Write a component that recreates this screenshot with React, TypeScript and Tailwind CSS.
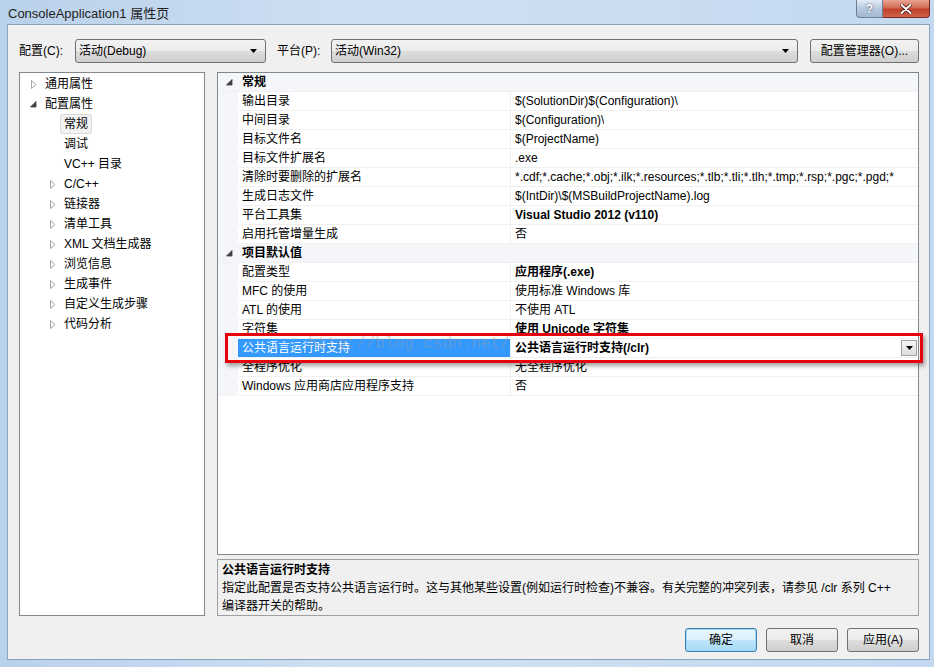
import React from 'react';

const FONT = { fontFamily: '"Liberation Sans", "Noto Sans CJK SC", sans-serif' };

type Prop = { name: string; value: string; bold?: boolean; selected?: boolean };
type Cat = { title: string; rows: Prop[] };

const cats: Cat[] = [
  {
    title: '常规',
    rows: [
      { name: '输出目录', value: '$(SolutionDir)$(Configuration)\\' },
      { name: '中间目录', value: '$(Configuration)\\' },
      { name: '目标文件名', value: '$(ProjectName)' },
      { name: '目标文件扩展名', value: '.exe' },
      {
        name: '清除时要删除的扩展名',
        value: '*.cdf;*.cache;*.obj;*.ilk;*.resources;*.tlb;*.tli;*.tlh;*.tmp;*.rsp;*.pgc;*.pgd;*',
      },
      { name: '生成日志文件', value: '$(IntDir)\\$(MSBuildProjectName).log' },
      { name: '平台工具集', value: 'Visual Studio 2012 (v110)', bold: true },
      { name: '启用托管增量生成', value: '否' },
    ],
  },
  {
    title: '项目默认值',
    rows: [
      { name: '配置类型', value: '应用程序(.exe)', bold: true },
      { name: 'MFC 的使用', value: '使用标准 Windows 库' },
      { name: 'ATL 的使用', value: '不使用 ATL' },
      { name: '字符集', value: '使用 Unicode 字符集', bold: true },
      { name: '公共语言运行时支持', value: '公共语言运行时支持(/clr)', bold: true, selected: true },
      { name: '全程序优化', value: '无全程序优化' },
      { name: 'Windows 应用商店应用程序支持', value: '否' },
    ],
  },
];

const tree: { label: string; level: number; arrow?: 'closed' | 'open'; selected?: boolean }[] = [
  { label: '通用属性', level: 0, arrow: 'closed' },
  { label: '配置属性', level: 0, arrow: 'open' },
  { label: '常规', level: 1, selected: true },
  { label: '调试', level: 1 },
  { label: 'VC++ 目录', level: 1 },
  { label: 'C/C++', level: 1, arrow: 'closed' },
  { label: '链接器', level: 1, arrow: 'closed' },
  { label: '清单工具', level: 1, arrow: 'closed' },
  { label: 'XML 文档生成器', level: 1, arrow: 'closed' },
  { label: '浏览信息', level: 1, arrow: 'closed' },
  { label: '生成事件', level: 1, arrow: 'closed' },
  { label: '自定义生成步骤', level: 1, arrow: 'closed' },
  { label: '代码分析', level: 1, arrow: 'closed' },
];

function Arrow({ kind }: { kind: 'closed' | 'open' }) {
  if (kind === 'closed')
    return (
      <svg width="6" height="9" viewBox="0 0 6 9">
        <path d="M0.5 0.5 L5 4.5 L0.5 8.5 Z" fill="white" stroke="#a6a6a6" />
      </svg>
    );
  return (
    <svg width="7" height="7" viewBox="0 0 7 7">
      <path d="M6 0.5 L6 6 L0.5 6 Z" fill="#404040" stroke="#404040" strokeWidth="0.8" />
    </svg>
  );
}

function DownArrow() {
  return (
    <svg width="7" height="4" viewBox="0 0 7 4">
      <path d="M0 0 H7 L3.5 4 Z" fill="#000" />
    </svg>
  );
}

function Combo({ text, width }: { text: string; width: string }) {
  return (
    <div
      className={`${width} shrink-0 h-[24px] flex items-center justify-between pl-[3px] pr-[8px] rounded-[3px] border border-[#707070] bg-[linear-gradient(#f2f2f2_0%,#ebebeb_50%,#dddddd_50%,#cfcfcf_100%)]`}
    >
      <span className="text-[12px]">{text}</span>
      <DownArrow />
    </div>
  );
}

function Btn({ text, width, def }: { text: string; width: string; def?: boolean }) {
  return (
    <div
      className={`${width} shrink-0 h-[24px] flex items-center justify-center rounded-[3px] border text-[12px] ${
        def
          ? 'border-[#3c7fb1] shadow-[inset_0_0_0_1px_#9ed8f5] bg-[linear-gradient(#eaf6fd_0%,#d9f0fc_50%,#bee6fd_50%,#a7d9f5_100%)]'
          : 'border-[#707070] bg-[linear-gradient(#f2f2f2_0%,#ebebeb_50%,#dddddd_50%,#cfcfcf_100%)]'
      }`}
    >
      {text}
    </div>
  );
}

function CatRow({ title }: { title: string }) {
  return (
    <div className="h-[19px] flex items-center bg-[#f4f6fa] border-b border-[#eef0f4]">
      <div className="w-[20px] flex justify-center pl-[2px]">
        <Arrow kind="open" />
      </div>
      <span className="pl-[4px] font-bold text-[12px]">{title}</span>
    </div>
  );
}

function PropRow({ p }: { p: Prop }) {
  return (
    <div className="h-[19px] flex">
      <div className="w-[20px] shrink-0 bg-[#f4f6fa]" />
      <div
        className={`w-[273px] shrink-0 flex items-center pl-[4px] border-b border-r border-[#f0f0f0] text-[12px] whitespace-nowrap ${
          p.selected ? 'bg-[#3399ff] text-white' : 'bg-white'
        }`}
      >
        {p.name}
      </div>
      <div className="flex-1 min-w-0 flex items-center justify-between pl-[4px] pr-[1px] border-b border-[#f0f0f0] bg-white overflow-hidden">
        <span className={`min-w-0 text-[12px] whitespace-nowrap overflow-hidden ${p.bold ? 'font-bold' : ''}`}>
          {p.value}
        </span>
        {p.selected && (
          <div className="w-[16px] h-[16px] shrink-0 flex items-center justify-center border border-[#a0a0a0] bg-[linear-gradient(#f6f6f6,#dcdcdc)]">
            <DownArrow />
          </div>
        )}
      </div>
    </div>
  );
}

export default function App() {
  return (
    <div
      className="w-[934px] h-[667px] flex flex-col overflow-hidden bg-[linear-gradient(90deg,#b9d1ea,#cfe0f3_40%,#c4d9ef)] text-black"
      style={FONT}
    >
      {/* title bar */}
      <div className="h-[24px] flex items-start justify-between shrink-0">
        <span className="pl-[8px] pt-[4px] text-[13px] text-[#1e1e1e]">ConsoleApplication1 属性页</span>
        <div className="flex mr-[4px]">
          <div className="w-[27px] h-[18px] flex items-center justify-center rounded-bl-[4px] border border-t-0 border-[#6d7e96] bg-[linear-gradient(#e3ecf6,#b7c9de_50%,#a4b9d3)] text-white text-[12px] font-bold [text-shadow:0_0_2px_#30405a]">
            ?
          </div>
          <div className="w-[47px] h-[18px] flex items-center justify-center rounded-br-[4px] border border-t-0 border-l-0 border-[#7a2a22] bg-[linear-gradient(#e8a493,#d26b54_45%,#c0402c_55%,#d0644c)]">
            <svg width="12" height="10" viewBox="0 0 12 10">
              <path d="M1.5 1 L10.5 9 M10.5 1 L1.5 9" stroke="#3a0c06" strokeWidth="3.4" strokeLinecap="round" />
              <path d="M1.5 1 L10.5 9 M10.5 1 L1.5 9" stroke="#fff" strokeWidth="2" strokeLinecap="round" />
            </svg>
          </div>
        </div>
      </div>

      {/* client area */}
      <div className="flex-1 ml-[7px] mr-[4px] mb-[7px] bg-[#f0f0f0] border border-[#8aa3bf] flex flex-col pl-[11px] pr-[10px] pt-[14px] text-[12px]">
        {/* config row */}
        <div className="h-[24px] flex items-center">
          <span className="w-[56px] shrink-0">配置(C):</span>
          <Combo text="活动(Debug)" width="w-[191px]" />
          <span className="ml-[11px] w-[54px] shrink-0">平台(P):</span>
          <Combo text="活动(Win32)" width="w-[467px]" />
          <div className="ml-[12px]">
            <Btn text="配置管理器(O)..." width="w-[109px]" />
          </div>
        </div>

        {/* main */}
        <div className="mt-[9px] h-[544px] flex gap-[12px]">
          {/* tree */}
          <div className="w-[186px] shrink-0 bg-white border border-[#828790] pt-[1px]">
            {tree.map((t) => (
              <div key={t.label} className="h-[20px] flex items-center whitespace-nowrap">
                <div
                  className={`${t.level === 0 ? 'w-[21px]' : 'w-[40px]'} shrink-0 flex justify-end pr-[4px]`}
                >
                  {t.arrow && <Arrow kind={t.arrow} />}
                </div>
                <span
                  className={`px-[3px] leading-[18px] border ${
                    t.selected ? 'border-[#d9d9d9] bg-[#f2f2f2] rounded-[2px]' : 'border-transparent'
                  }`}
                >
                  {t.label}
                </span>
              </div>
            ))}
          </div>

          {/* right column */}
          <div className="w-[702px] shrink-0 min-w-0 flex flex-col gap-[4px]">
            <div className="relative h-[483px] bg-white border border-[#828790] overflow-hidden">
              {cats.map((c) => (
                <div key={c.title}>
                  <CatRow title={c.title} />
                  {c.rows.map((r) => (
                    <PropRow key={r.name} p={r} />
                  ))}
                </div>
              ))}

              {/* watermark */}
              <span
                className="absolute left-[90px] top-[262px] text-[16px] leading-[18px] text-[#9a9a9a] opacity-40 whitespace-nowrap pointer-events-none"
                style={{ fontFamily: '"Liberation Mono", monospace' }}
              >
                http://blog.csdn.net/
              </span>
            </div>

            <div className="h-[57px] bg-[#f0f0f0] border border-[#a0a0a0] px-[4px] pt-[1px] leading-[18px]">
              <div className="font-bold">公共语言运行时支持</div>
              <div>
                指定此配置是否支持公共语言运行时。这与其他某些设置(例如运行时检查)不兼容。有关完整的冲突列表，请参见 /clr 系列 C++
                <br />
                编译器开关的帮助。
              </div>
            </div>
          </div>
        </div>

        {/* buttons */}
        <div className="mt-[12px] flex justify-end gap-[9px]">
          <Btn text="确定" width="w-[72px]" def />
          <Btn text="取消" width="w-[72px]" />
          <Btn text="应用(A)" width="w-[72px]" />
        </div>
      </div>

      {/* red annotation box over the selected row */}
      <div className="pointer-events-none fixed left-[225px] top-[333px] w-[698px] h-[30px] border-[3px] border-[#e8000b] shadow-[2px_3px_4px_rgba(0,0,0,0.35)]" />
    </div>
  );
}
